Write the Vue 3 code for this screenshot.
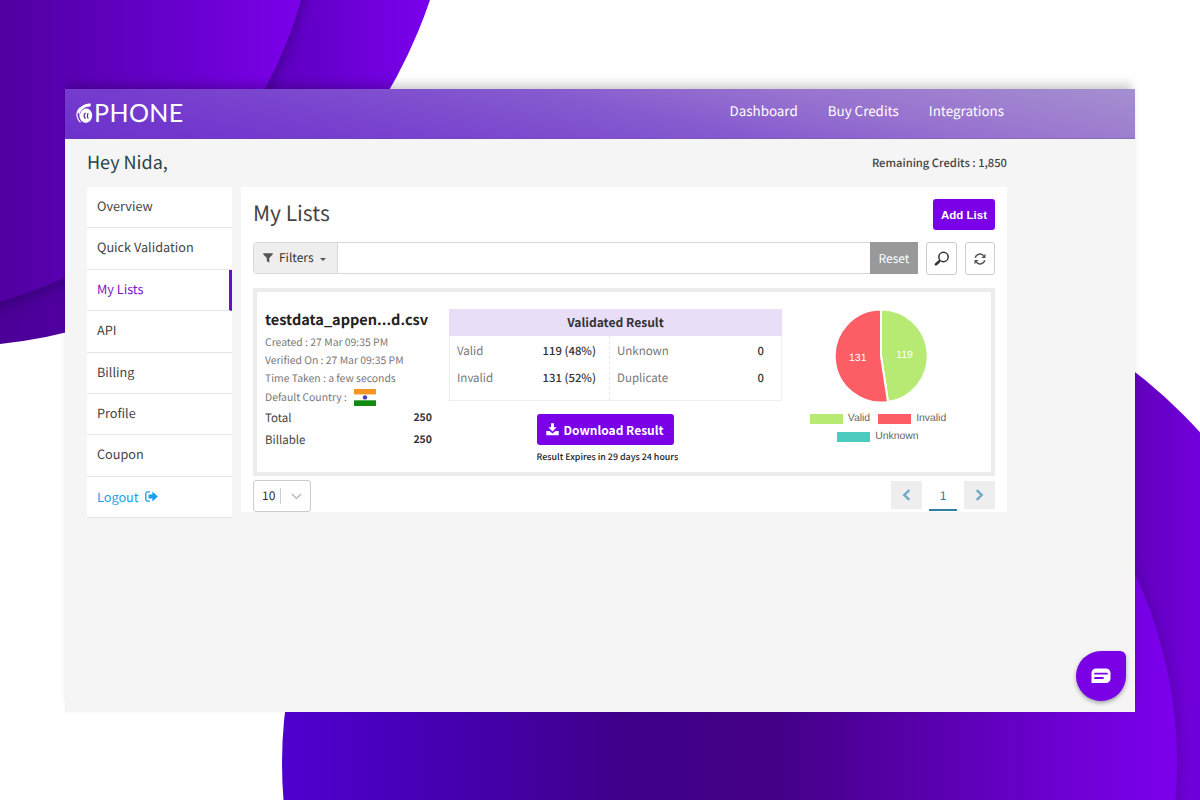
<script setup>
const menu = [
    { label: 'Overview' },
    { label: 'Quick Validation' },
    { label: 'My Lists', active: true },
    { label: 'API' },
    { label: 'Billing' },
    { label: 'Profile' },
    { label: 'Coupon' }
]

const details = [
    'Created : 27 Mar 09:35 PM',
    'Verified On : 27 Mar 09:35 PM',
    'Time Taken : a few seconds'
]

const results = [
    [
        { label: 'Valid', value: '119 (48%)' },
        { label: 'Invalid', value: '131 (52%)' }
    ],
    [
        { label: 'Unknown', value: '0' },
        { label: 'Duplicate', value: '0' }
    ]
]
</script>

<template>
    <div class="stage">
        <svg class="backdrop" width="1200" height="800" viewBox="0 0 1200 800">
            <defs>
                <linearGradient id="topOuter" gradientUnits="userSpaceOnUse" x1="0" y1="0" x2="430" y2="0">
                    <stop offset="0" stop-color="#4b0096" />
                    <stop offset="0.7" stop-color="#6200c6" />
                    <stop offset="1" stop-color="#7a00ee" />
                </linearGradient>
                <linearGradient id="topInner" gradientUnits="userSpaceOnUse" x1="0" y1="0" x2="300" y2="0">
                    <stop offset="0" stop-color="#5000a0" />
                    <stop offset="0.5" stop-color="#6300c6" />
                    <stop offset="1" stop-color="#7b00ea" />
                </linearGradient>
                <linearGradient id="bottomOuter" gradientUnits="userSpaceOnUse" x1="1135" y1="0" x2="1200" y2="0">
                    <stop offset="0" stop-color="#6200bc" />
                    <stop offset="1" stop-color="#7100dc" />
                </linearGradient>
                <linearGradient id="bottomInner" gradientUnits="userSpaceOnUse" x1="282" y1="0" x2="1177" y2="0">
                    <stop offset="0" stop-color="#5000cf" />
                    <stop offset="0.2" stop-color="#4400ae" />
                    <stop offset="0.38" stop-color="#3f008a" />
                    <stop offset="0.56" stop-color="#450088" />
                    <stop offset="0.75" stop-color="#5c00b4" />
                    <stop offset="0.88" stop-color="#6e00d4" />
                    <stop offset="1" stop-color="#7c00ee" />
                </linearGradient>
                <filter id="soft" x="-10%" y="-10%" width="120%" height="120%">
                    <feGaussianBlur stdDeviation="6" />
                </filter>
                <clipPath id="topClip"><circle cx="-53.7" cy="-163.9" r="510.7" /></clipPath>
                <clipPath id="bottomClip"><circle cx="813" cy="784" r="523" /></clipPath>
            </defs>
            <circle cx="-53.7" cy="-163.9" r="510.7" fill="url(#topOuter)" />
            <g clip-path="url(#topClip)">
                <circle cx="-119" cy="-112" r="437" fill="#2c0068" opacity="0.5" filter="url(#soft)" />
            </g>
            <circle cx="-119.2" cy="-118.2" r="436.5" fill="url(#topInner)" />
            <circle cx="813" cy="784" r="523" fill="url(#bottomOuter)" />
            <g clip-path="url(#bottomClip)">
                <circle cx="730" cy="762" r="447" fill="#38007c" opacity="0.4" filter="url(#soft)" />
            </g>
            <circle cx="729.5" cy="763" r="447.5" fill="url(#bottomInner)" />
        </svg>

        <div class="window">
            <header class="topbar">
                <div class="logo">
                    <svg width="17" height="21" viewBox="0 0 17 21">
                        <path d="M4.200 4.600C.8 7.600-.2 12.500 2.400 16.800c.6 1 1.300 1.800 2.100 2.400" fill="none" stroke="#fff" stroke-width="1.200" />
                        <path d="M14.800.600 14.500 3.600C9.500 3.300 5.300 6 4 11.500L2 9.500C3 3.800 8 .2 14.800.6Z" fill="#fff" />
                        <ellipse cx="9.800" cy="12.600" rx="6.400" ry="7.300" fill="#fff" />
                        <path d="M4 10.800C4.900 7.200 7.700 5 11.500 4.700" fill="none" stroke="#6d31cc" stroke-width="0.600" />
                        <path d="M9.800 10.200c-2.300.5-2.300 4.600 0 5.200M12.400 10.300c-1.300.2-1.300 4.800 0 5" fill="none" stroke="#5a28a8" stroke-width="1.300" />
                    </svg>
                    <span>PHONE</span>
                </div>
                <nav class="nav">
                    <a>Dashboard</a>
                    <a>Buy Credits</a>
                    <a>Integrations</a>
                </nav>
            </header>

            <div class="greeting">
                <h2>Hey Nida,</h2>
                <span class="credits">Remaining Credits : 1,850</span>
            </div>

            <div class="body">
                <aside class="sidebar">
                    <div v-for="item in menu" :key="item.label" class="menu-item" :class="{ active: item.active }">
                        {{ item.label }}
                    </div>
                    <div class="menu-item logout">
                        Logout
                        <svg width="13" height="11" viewBox="0 0 13 11">
                            <path d="M5 .9H2.600A1.800 1.800 0 0 0 .8 2.700v5.600a1.800 1.800 0 0 0 1.800 1.800H5" fill="none" stroke="currentColor" stroke-width="1.300" />
                            <path d="M3.600 3.500h3.800V.5L12.900 5.500 7.400 10.500V7.500H3.600Z" fill="currentColor" />
                        </svg>
                    </div>
                </aside>

                <main class="panel">
                    <div class="panel-head">
                        <h1>My Lists</h1>
                        <button class="add">Add List</button>
                    </div>

                    <div class="toolbar">
                        <div class="search">
                            <div class="filters">
                                <svg width="10" height="10" viewBox="0 0 10 10">
                                    <path d="M.2.300h9.600v1L6.300 5v4.800L3.800 8V5L.2 1.300Z" fill="#555" />
                                </svg>
                                <span>Filters</span>
                                <i class="caret"></i>
                            </div>
                            <div class="field"></div>
                            <div class="reset">Reset</div>
                        </div>
                        <button class="tool">
                            <svg width="16" height="16" viewBox="0 0 16 16" fill="none" stroke="#333">
                                <circle cx="10.500" cy="6" r="4.700" stroke-width="1.500" />
                                <path d="M7.200 9.300 5.700 10.700" stroke-width="1.500" />
                                <path d="M5.800 10.700 2.900 13.400" stroke-width="2.600" stroke-linecap="round" />
                            </svg>
                        </button>
                        <button class="tool">
                            <svg width="12" height="12" viewBox="0 0 12 12">
                                <path d="M1.200 4.800A4.900 4.900 0 0 1 9.600 2.700M10.800 7.200A4.900 4.900 0 0 1 2.400 9.300" fill="none" stroke="#555" stroke-width="1.500" />
                                <path d="M11.500.8v4.200H7.300ZM.5 11.200V7h4.200Z" fill="#555" />
                            </svg>
                        </button>
                    </div>

                    <section class="card">
                        <div class="file">
                            <h3>testdata_appen...d.csv</h3>
                            <p v-for="line in details" :key="line">{{ line }}</p>
                            <p class="country">
                                Default Country :
                                <svg width="22" height="17" viewBox="0 0 22 17">
                                    <rect width="22" height="17" fill="#fff" />
                                    <rect width="22" height="5.400" fill="#f7931e" />
                                    <rect y="11.300" width="22" height="5.700" fill="#128a12" />
                                    <circle cx="11" cy="8.400" r="2.200" fill="#4a3fb0" />
                                </svg>
                            </p>
                            <div class="total"><span>Total</span><b>250</b></div>
                            <div class="total"><span>Billable</span><b>250</b></div>
                        </div>

                        <div class="result">
                            <div class="table">
                                <div class="table-head">Validated Result</div>
                                <div class="table-body">
                                    <div v-for="(column, i) in results" :key="i" class="column">
                                        <div v-for="row in column" :key="row.label" class="cell">
                                            <span>{{ row.label }}</span>
                                            <b>{{ row.value }}</b>
                                        </div>
                                    </div>
                                </div>
                            </div>
                            <div class="download">
                                <button>
                                    <svg width="13" height="13" viewBox="0 0 13 13" fill="#fff">
                                        <path d="M5 .3h3V4.200h2.700L6.500 8.600 2.300 4.200H5Z" />
                                        <path d="M.3 8h3.200l3 2.500 3-2.500h3.200v4.300H.3Z" />
                                    </svg>
                                    Download Result
                                </button>
                                <small>Result Expires in 29 days 24 hours</small>
                            </div>
                        </div>

                        <div class="chart">
                            <svg width="94" height="94" viewBox="0 0 94 94">
                                <path d="M47 47V.500A46.500 46.500 0 0 1 54 93Z" fill="#b6ea72" stroke="#fff" stroke-width="2" />
                                <path d="M47 47 54 93A46.500 46.500 0 1 1 47 .500Z" fill="#fd5d65" stroke="#fff" stroke-width="2" />
                                <text x="70.500" y="48.500">119</text>
                                <text x="23.800" y="51.500">131</text>
                            </svg>
                            <div class="legend">
                                <span><i class="valid"></i>Valid</span>
                                <span><i class="invalid"></i>Invalid</span>
                                <span><i class="unknown"></i>Unknown</span>
                            </div>
                        </div>
                    </section>

                    <footer class="pager">
                        <div class="size">
                            <span>10</span>
                            <svg width="11" height="7" viewBox="0 0 11 7">
                                <path d="m1 1 4.500 4.500L10 1" fill="none" stroke="#bbb" stroke-width="1.500" />
                            </svg>
                        </div>
                        <div class="pages">
                            <div class="arrow">
                                <svg width="9" height="12" viewBox="0 0 9 12">
                                    <path d="M7.300 1.200 2.300 6l5 4.800" fill="none" stroke="#72a9c6" stroke-width="2.400" />
                                </svg>
                            </div>
                            <div class="current">1</div>
                            <div class="arrow">
                                <svg width="9" height="12" viewBox="0 0 9 12">
                                    <path d="m1.700 1.200 5 4.800-5 4.800" fill="none" stroke="#72a9c6" stroke-width="2.400" />
                                </svg>
                            </div>
                        </div>
                    </footer>
                </main>
            </div>

            <div class="chat">
                <svg width="20" height="16" viewBox="0 0 20 16">
                    <path d="M5 .5h10a4.500 4.500 0 0 1 4.500 4.500v5.500A4.500 4.500 0 0 1 15 15H.5V5A4.500 4.500 0 0 1 5 .5Z" fill="#fff" />
                    <path d="M4 5.700h12M4 10h8" stroke="#7a00e6" stroke-width="1.800" stroke-linecap="round" />
                </svg>
            </div>
        </div>
    </div>
</template>

<style>
body {
    margin: 0;
    overflow: hidden;
}
</style>

<style scoped>
* {
    box-sizing: border-box;
}

.stage {
    position: relative;
    width: 1200px;
    height: 800px;
    padding: 89px 65px 88px;
    overflow: hidden;
    background: #fff;
    font-family: "Noto Sans CJK SC", "Noto Sans", sans-serif;
    text-rendering: geometricPrecision;
    color: #444;
}

.backdrop {
    position: absolute;
    top: 0;
    left: 0;
}

h1,
h2,
h3,
p {
    margin: 0;
    font-weight: 400;
}

svg {
    display: block;
    flex-shrink: 0;
}

button {
    display: flex;
    align-items: center;
    justify-content: center;
    padding: 0;
    border: 0;
    font-family: inherit;
}

.window {
    position: relative;
    height: 623px;
    background: #f5f5f5;
    box-shadow: 0 -9px 8px -3px rgba(0, 0, 0, 0.16), 0 0 4px rgba(0, 0, 0, 0.04);
}

.topbar {
    height: 50px;
    padding: 0 131px 0 11px;
    display: flex;
    justify-content: space-between;
    background: linear-gradient(12deg, #6d31cc 0%, #7740ce 25%, #8559cf 52%, #9873cf 72%, #a58fd0 100%);
    border-bottom: 1px solid rgba(80, 40, 150, 0.3);
}

.logo {
    display: flex;
    align-items: center;
    padding-bottom: 1px;
    color: #fff;
}

.logo span {
    margin-left: 1px;
    font: 25px/30px Lato, sans-serif;
    letter-spacing: 0.4px;
}

.nav {
    display: flex;
    gap: 30px;
    font-size: 13.400px;
    line-height: 43px;
    color: #fff;
}

.greeting {
    height: 48px;
    padding: 0 128px 0 22px;
    display: flex;
    justify-content: space-between;
    line-height: 47px;
}

.greeting h2 {
    font-size: 18px;
    color: #2a4543;
}

.credits {
    font-size: 11.200px;
    font-weight: 500;
    line-height: 49px;
}

.body {
    padding-left: 22px;
    display: flex;
    align-items: flex-start;
    gap: 9px;
}

.sidebar {
    width: 145px;
    background: #fff;
}

.menu-item {
    height: 41.400px;
    padding-left: 10px;
    border-bottom: 1px solid #e4e4e4;
    font-size: 12.700px;
    line-height: 38px;
}

.menu-item.active {
    border-right: 3px solid #6a0dc4;
    color: #7a12c8;
}

.logout {
    display: flex;
    align-items: center;
    gap: 6px;
    color: #1a9fe8;
}

.panel {
    width: 766px;
    height: 324.500px;
    padding: 0 12px;
    background: #fff;
}

.panel-head {
    height: 55px;
    padding-top: 12px;
    display: flex;
    justify-content: space-between;
}

.panel-head h1 {
    font-size: 21px;
    line-height: 29px;
}

.add {
    width: 62px;
    height: 31px;
    border-radius: 3px;
    background: #7a00e8;
    font: bold 11.500px "Liberation Sans", sans-serif;
    color: #fff;
}

.toolbar {
    height: 33px;
    display: flex;
    gap: 8px;
}

.search {
    height: 32px;
    flex: 1;
    display: flex;
    border: 1px solid #d8d8d8;
    border-radius: 3px 0 0 3px;
    font-size: 12px;
    line-height: 30px;
}

.filters {
    width: 84px;
    padding-left: 9px;
    display: flex;
    align-items: center;
    gap: 6px;
    border-right: 1px solid #d8d8d8;
    background: #eee;
    color: #333;
}

.caret {
    border: 3px solid transparent;
    border-top-color: #555;
    border-bottom: 0;
    margin-top: 2px;
}

.field {
    flex: 1;
}

.reset {
    width: 48px;
    margin: -1px;
    background: #999;
    text-align: center;
    line-height: 33px;
    color: #fff;
}

.tool {
    width: 30.500px;
    height: 33px;
    border: 1px solid #ccc;
    border-radius: 3px;
    background: #fff;
}

.card {
    height: 188px;
    margin-top: 13px;
    display: flex;
    border: 4px solid #ececec;
}

.file {
    width: 175px;
    padding: 17px 0 0 8px;
    color: #777;
}

.file h3 {
    margin-bottom: 2px;
    font-size: 14.500px;
    font-weight: 600;
    line-height: 22px;
    color: #222;
    white-space: nowrap;
}

.file p {
    font-size: 10.400px;
    line-height: 18.200px;
    white-space: nowrap;
}

.country {
    display: flex;
    align-items: center;
    gap: 7px;
}

.country svg {
    margin-top: 1px;
}

.total {
    display: flex;
    justify-content: space-between;
    font-size: 11.500px;
    line-height: 22px;
    color: #444;
}

.country + .total {
    margin-top: 1px;
}

.total b,
.cell b {
    font-size: 10.500px;
    font-weight: 600;
    color: #333;
}

.cell b {
    font-size: 11.300px;
    font-weight: 500;
}

.result {
    width: 333px;
    margin: 17px 0 0 17px;
}

.table {
    height: 92px;
    border: 1px solid #eee;
    border-top: 0;
}

.table-head {
    height: 27px;
    margin: 0 -1px;
    background: #e8def8;
    font-size: 12.100px;
    font-weight: 600;
    line-height: 28px;
    text-align: center;
    color: #333;
}

.table-body {
    display: flex;
}

.column {
    width: 159px;
    height: 64px;
    padding: 2px 13px 0 7px;
}

.column + .column {
    width: 172px;
    padding-right: 17px;
    border-left: 1px dashed #e8e8e8;
}

.cell {
    display: flex;
    justify-content: space-between;
    font-size: 11.500px;
    line-height: 27px;
    color: #777;
}

.download {
    padding: 13px 0 0 87.500px;
}

.download button {
    width: 137px;
    height: 31px;
    gap: 4px;
    border-radius: 3px;
    background: #7a00e8;
    font-size: 12px;
    font-weight: 700;
    color: #fff;
}

.download small {
    display: block;
    font-size: 8.900px;
    font-weight: 500;
    line-height: 23px;
    color: #222;
}

.chart {
    flex: 1;
    padding: 17px 17px 0 0;
    display: flex;
    flex-direction: column;
    align-items: center;
}

.chart > svg {
    margin-left: 6px;
}

.chart text {
    font: 10.500px "Liberation Sans", sans-serif;
    text-anchor: middle;
    fill: #fff;
}

.legend {
    width: 150px;
    margin: 7px 0 0;
    display: flex;
    flex-wrap: wrap;
    justify-content: center;
    column-gap: 8px;
    font: 10.400px/18px "Liberation Sans", sans-serif;
    color: #666;
}

.legend span {
    display: flex;
    align-items: center;
    gap: 5px;
}

.legend i {
    width: 33px;
    height: 10px;
}

.valid {
    background: #b6ea72;
}

.invalid {
    background: #fd5d65;
}

.unknown {
    background: #4ecbbf;
}

.pager {
    margin-top: 4px;
    display: flex;
    justify-content: space-between;
}

.size {
    width: 58px;
    height: 32px;
    padding-left: 8px;
    display: flex;
    align-items: center;
    gap: 10px;
    border: 1px solid #ccc;
    border-radius: 3px;
    font-size: 12px;
    color: #333;
}

.size span {
    padding-right: 5px;
    border-right: 1px solid #ccc;
    line-height: 16px;
}

.pages {
    margin-top: 1px;
    display: flex;
    gap: 7px;
}

.arrow {
    width: 31px;
    height: 28px;
    display: flex;
    align-items: center;
    justify-content: center;
    background: #eee;
}

.current {
    width: 28px;
    height: 30px;
    border-bottom: 2px solid #2d7fa3;
    font-size: 12px;
    line-height: 29px;
    text-align: center;
    color: #2779a7;
}

.chat {
    position: absolute;
    right: 9px;
    bottom: 11px;
    width: 50px;
    height: 50px;
    display: flex;
    align-items: center;
    justify-content: center;
    border-radius: 50% 6px 50% 50%;
    background: #7a00e6;
    box-shadow: 0 2px 4px rgba(0, 0, 0, 0.35);
}
</style>
